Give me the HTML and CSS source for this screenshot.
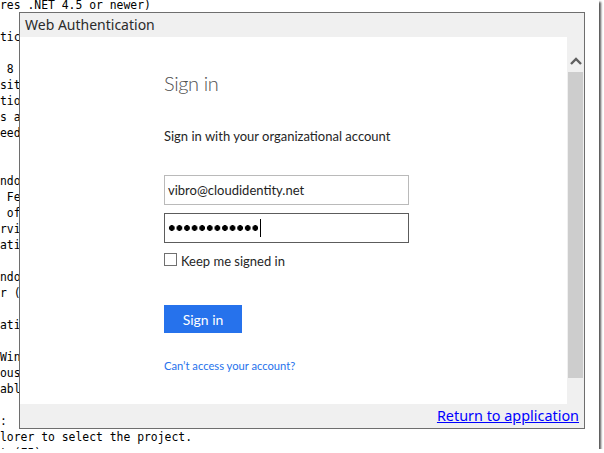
FILE: index.html
```html
<!DOCTYPE html>
<html lang="en">
<head>
    <meta charset="UTF-8">
    <title>Web Authentication</title>
    <link rel="stylesheet" href="styles.css">
</head>
<body>
    <div class="shot">
        <div class="console">
            <div class="ln">res .NET 4.5 or newer)</div>
            <div class="ln"></div>
            <div class="ln">tic</div>
            <div class="ln"></div>
            <div class="ln"> 8</div>
            <div class="ln">sit</div>
            <div class="ln">tio</div>
            <div class="ln">s a</div>
            <div class="ln">eed</div>
            <div class="ln"></div>
            <div class="ln"></div>
            <div class="ln">ndo</div>
            <div class="ln"> Fe</div>
            <div class="ln"> of</div>
            <div class="ln">rvi</div>
            <div class="ln">ati</div>
            <div class="ln"></div>
            <div class="ln">ndo</div>
            <div class="ln">r (</div>
            <div class="ln"></div>
            <div class="ln">ati</div>
            <div class="ln"></div>
            <div class="ln">Win</div>
            <div class="ln">ous</div>
            <div class="ln">abl</div>
            <div class="ln"></div>
            <div class="ln">:</div>
            <div class="ln">lorer to select the project.</div>
            <div class="ln">t (F5)</div>
        </div>

        <div class="dialog">
            <div class="titlebar">Web Authentication</div>
            <div class="body">
                <div class="page">
                    <div class="signin">
                        <h1>Sign in</h1>
                        <p class="lead">Sign in with your organizational account</p>
                        <div class="field">vibro@cloudidentity.net</div>
                        <div class="field focused"><span class="dots"></span><span class="caret"></span></div>
                        <div class="keep"><span class="box"></span>Keep me signed in</div>
                        <button class="submit">Sign in</button>
                        <a class="help">Can’t access your account?</a>
                    </div>
                </div>
                <div class="scrollbar">
                    <svg width="12" height="8" viewBox="0 0 12 8">
                        <path d="M1 7 L6 2 L11 7" fill="none" stroke="#606060" stroke-width="2.4"/>
                    </svg>
                    <div class="thumb"></div>
                </div>
            </div>
            <div class="footer"><a>Return to application</a></div>
        </div>
    </div>
</body>
</html>
```

FILE: styles.css
```css
body {
    margin: 0;
    background: #ffffff;
    font-family: "Noto Sans", sans-serif;
}
.shot {
    position: relative;
    width: 599px;
    height: 449px;
    overflow: hidden;
    background: #ffffff;
    box-shadow: 2px 2px 2px #555555;
}
.console {
    margin-top: -3px;
    font-family: "DejaVu Sans Mono", monospace;
    font-size: 11.4px;
    color: #000000;
}
.ln {
    height: 16px;
    line-height: 16px;
    white-space: pre;
}
.dialog {
    position: absolute;
    left: 19px;
    top: 12px;
    width: 564px;
    height: 415px;
    border: 1px solid #6e6e6e;
    background: #f0f0f0;
    display: flex;
    flex-direction: column;
}
.titlebar {
    height: 24px;
    line-height: 24px;
    padding-left: 5px;
    font-size: 14px;
    color: #2b2b2b;
}
.body {
    display: flex;
    height: 367px;
}
.page {
    width: 547px;
    background: #ffffff;
    padding: 32px 0 0 144px;
    box-sizing: border-box;
    font-family: Lato, "Noto Sans", sans-serif;
}
.signin {
    display: flex;
    flex-direction: column;
    align-items: flex-start;
}
h1 {
    margin: 0;
    font-size: 20px;
    font-weight: 300;
    letter-spacing: -0.4px;
    line-height: 28px;
    color: #505050;
}
.lead {
    margin: 30px 0 0 0;
    font-size: 13px;
    line-height: 18px;
    color: #262626;
}
.field {
    margin-top: 30px;
    width: 245px;
    height: 30px;
    box-sizing: border-box;
    border: 1px solid #bababa;
    padding-left: 3px;
    display: flex;
    align-items: center;
    font-size: 13px;
    color: #1e1e1e;
}
.field.focused {
    margin-top: 8px;
    border-color: #5c5c5c;
}
.dots {
    width: 90px;
    height: 6px;
    background: radial-gradient(circle, #000000 2.6px, transparent 3.1px) 0 0 / 7.6px 6px repeat-x;
}
.caret {
    width: 1px;
    height: 18px;
    margin-left: 2px;
    background: #000000;
}
.keep {
    margin-top: 9px;
    display: flex;
    align-items: flex-start;
    font-size: 13px;
    line-height: 18px;
    color: #262626;
}
.box {
    width: 11px;
    height: 11px;
    margin: 1px 4px 0 0;
    border: 1px solid #707070;
    background: #ffffff;
}
.submit {
    margin-top: 35px;
    width: 78px;
    height: 28px;
    border: none;
    background: #2672ec;
    color: #ffffff;
    font-family: Lato, "Noto Sans", sans-serif;
    font-size: 14px;
    padding: 0;
}
.help {
    margin-top: 25px;
    font-size: 11.2px;
    line-height: 16px;
    color: #2672ec;
}
.scrollbar {
    width: 17px;
    display: flex;
    flex-direction: column;
    align-items: center;
    padding-top: 20px;
    box-sizing: border-box;
}
.thumb {
    margin-top: 7px;
    width: 15px;
    height: 306px;
    background: #cdcdcd;
}
.footer {
    height: 24px;
    line-height: 23px;
    text-align: right;
    padding-right: 5px;
}
.footer a {
    font-size: 14.4px;
    color: #0000ff;
    text-decoration: underline;
}
```
